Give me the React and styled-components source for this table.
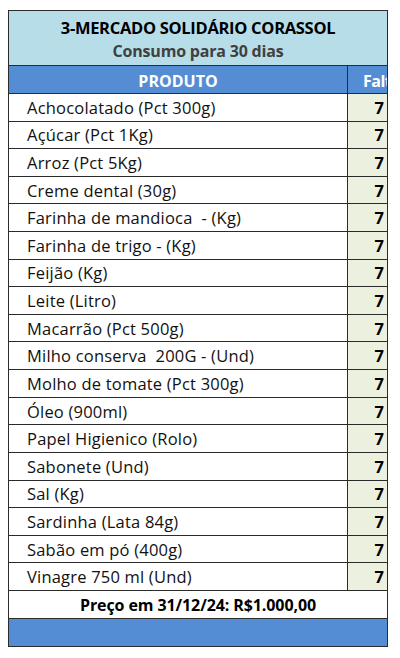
import React from 'react';
import styled, { createGlobalStyle } from 'styled-components';

const items = [
  'Achocolatado (Pct 300g)',
  'Açúcar (Pct 1Kg)',
  'Arroz (Pct 5Kg)',
  'Creme dental (30g)',
  'Farinha de mandioca  - (Kg)',
  'Farinha de trigo - (Kg)',
  'Feijão (Kg)',
  'Leite (Litro)',
  'Macarrão (Pct 500g)',
  'Milho conserva  200G - (Und)',
  'Molho de tomate (Pct 300g)',
  'Óleo (900ml)',
  'Papel Higienico (Rolo)',
  'Sabonete (Und)',
  'Sal (Kg)',
  'Sardinha (Lata 84g)',
  'Sabão em pó (400g)',
  'Vinagre 750 ml (Und)',
];

export default function App() {
  return (
    <>
      <GlobalStyle />
      <Sheet>
        <Title>
          <MainTitle>3-MERCADO SOLIDÁRIO CORASSOL</MainTitle>
          <SubTitle>Consumo para 30 dias</SubTitle>
        </Title>
        <HeaderRow>
          <HeaderCell>PRODUTO</HeaderCell>
          <HeaderCell $side>Falta</HeaderCell>
        </HeaderRow>
        <Rows>
          {items.map(item => (
            <Row key={item}>
              <NameCell>{item}</NameCell>
              <QtyCell>7</QtyCell>
            </Row>
          ))}
        </Rows>
        <PriceRow>Preço em 31/12/24: R$1.000,00</PriceRow>
        <Footer />
      </Sheet>
    </>
  );
}

const GlobalStyle = createGlobalStyle`
  html, body {
    margin: 0;
    padding: 0;
    background: #ffffff;
  }
  body {
    font-family: "Open Sans", "Liberation Sans", sans-serif;
    color: #000;
  }
`;

const Sheet = styled.div`
  width: 380px;
  margin: 10px 0 0 8px;
  border: 1px solid #2b2b2b;
  box-sizing: border-box;
  display: flex;
  flex-direction: column;
`;

const Title = styled.div`
  height: 55px;
  background: #b7dee8;
  border-bottom: 1px solid #2b2b2b;
  box-sizing: border-box;
  display: flex;
  flex-direction: column;
  align-items: center;
  justify-content: center;
  gap: 3px;
  padding-top: 2px;
`;

const MainTitle = styled.div`
  font-size: 16.5px;
  font-weight: 700;
  line-height: 20px;
  letter-spacing: -0.3px;
`;

const SubTitle = styled.div`
  font-size: 16px;
  font-weight: 700;
  line-height: 20px;
  color: #404040;
  letter-spacing: -0.2px;
`;

const HeaderRow = styled.div`
  height: 28px;
  display: grid;
  grid-template-columns: 1fr 40px;
  background: #548dd4;
  border-bottom: 1px solid #2b2b2b;
  box-sizing: border-box;
`;

const HeaderCell = styled.div`
  color: #ffffff;
  font-weight: 700;
  font-size: 16px;
  letter-spacing: ${p => (p.$side ? '-0.5px' : '0')};
  line-height: 27px;
  padding-top: 2px;
  box-sizing: border-box;
  overflow: hidden;
  white-space: nowrap;
  text-align: ${p => (p.$side ? 'left' : 'center')};
  padding-left: ${p => (p.$side ? '15px' : '0')};
  border-left: ${p => (p.$side ? '1px solid #2b2b2b' : 'none')};
`;

const Rows = styled.div`
  height: 497px;
  display: flex;
  flex-direction: column;
`;

const Row = styled.div`
  flex: 1;
  display: grid;
  grid-template-columns: 1fr 40px;
  border-bottom: 1px solid #2b2b2b;
  box-sizing: border-box;
  min-height: 0;
`;

const NameCell = styled.div`
  font-size: 16.5px;
  letter-spacing: 0.2px;
  padding-left: 18px;
  display: flex;
  align-items: center;
  white-space: pre;
  overflow: hidden;
  color: #111;
`;

const QtyCell = styled.div`
  background: #ebf1de;
  border-left: 1px solid #2b2b2b;
  font-weight: 700;
  font-size: 16.5px;
  display: flex;
  align-items: center;
  justify-content: flex-end;
  padding-right: 3px;
`;

const PriceRow = styled.div`
  height: 28px;
  border-bottom: 1px solid #2b2b2b;
  box-sizing: border-box;
  font-weight: 700;
  font-size: 16px;
  letter-spacing: -0.1px;
  display: flex;
  align-items: center;
  justify-content: center;
`;

const Footer = styled.div`
  height: 27px;
  background: #548dd4;
`;
